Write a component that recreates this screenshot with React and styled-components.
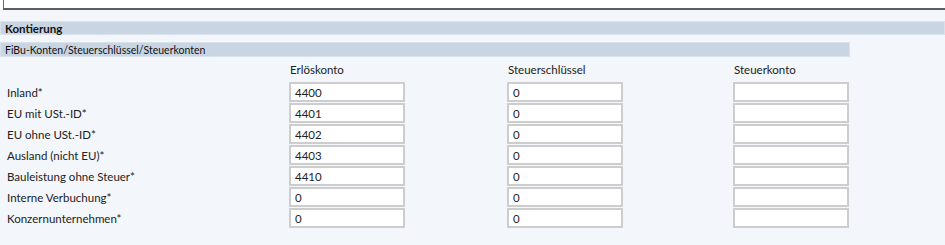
import React from "react";
import styled, { createGlobalStyle } from "styled-components";

const FONT = `"Lato", "Open Sans", "Noto Sans", sans-serif`;

const Global = createGlobalStyle`
  html, body { margin: 0; padding: 0; }
  body {
    background: #f3f6fa;
    font-family: ${FONT};
    font-size: 11.5px;
    color: #1e1e1e;
  }
`;

const Page = styled.div`
  width: 945px;
  height: 245px;
  overflow: hidden;
  background: #f3f6fa;
`;

const TopArea = styled.div`
  background: #ffffff;
  padding-left: 3px;
  height: 10px;
`;

const TopBox = styled.div`
  height: 8px;
  border-left: 1px solid #6a6a6a;
  border-bottom: 2px solid #5e5e5e;
  background: #ffffff;
`;

const SectionBar = styled.div`
  margin-top: ${(p) => p.$mt}px;
  width: ${(p) => p.$w};
  height: ${(p) => p.$h}px;
  box-sizing: border-box;
  background: #c9d5e3;
  border: 1px solid #d9e1eb;
  display: flex;
  align-items: center;
  padding-left: 4px;
  font-weight: ${(p) => (p.$bold ? 700 : 400)};
  font-size: ${(p) => p.$fs}px;
  color: #111;
  white-space: nowrap;
`;

const HeaderGrid = styled.div`
  display: grid;
  grid-template-columns: 282px 218px 226px 1fr;
  padding-left: 7px;
  height: 25px;
`;

const HeaderCell = styled.div`
  display: flex;
  align-items: center;
  padding-left: 1px;
  font-size: 11.5px;
  color: #222;
`;

const Form = styled.div`
  display: grid;
  grid-template-columns: 282px 218px 226px 1fr;
  grid-auto-rows: 21px;
  padding-left: 7px;
`;

const Label = styled.div`
  display: flex;
  align-items: center;
  height: 20px;
  font-size: 11.5px;
  color: #222;
  white-space: nowrap;
`;

const Field = styled.input`
  box-sizing: border-box;
  width: 116px;
  height: 20px;
  margin: 0;
  padding: 0 0 0 4px;
  border: 2px solid #cdcdcd;
  background: #ffffff;
  font-family: ${FONT};
  font-size: 11.5px;
  color: #1e1e1e;
  outline: none;
`;

const rows = [
  ["Inland*", "4400", "0", ""],
  ["EU mit USt.-ID*", "4401", "0", ""],
  ["EU ohne USt.-ID*", "4402", "0", ""],
  ["Ausland (nicht EU)*", "4403", "0", ""],
  ["Bauleistung ohne Steuer*", "4410", "0", ""],
  ["Interne Verbuchung*", "0", "0", ""],
  ["Konzernunternehmen*", "0", "0", ""],
];

export default function App() {
  return (
    <Page>
      <Global />
      <TopArea>
        <TopBox />
      </TopArea>
      <SectionBar $mt={11} $w="945px" $h={14} $fs={11.5} $bold>
        Kontierung
      </SectionBar>
      <SectionBar $mt={7} $w="850px" $h={15} $fs={10.5}>
        FiBu-Konten/Steuerschlüssel/Steuerkonten
      </SectionBar>
      <HeaderGrid>
        <span />
        <HeaderCell>Erlöskonto</HeaderCell>
        <HeaderCell>Steuerschlüssel</HeaderCell>
        <HeaderCell>Steuerkonto</HeaderCell>
      </HeaderGrid>
      <Form>
        {rows.map(([label, a, b, c]) => (
          <React.Fragment key={label}>
            <Label>{label}</Label>
            <Field defaultValue={a} />
            <Field defaultValue={b} />
            <Field defaultValue={c} />
          </React.Fragment>
        ))}
      </Form>
    </Page>
  );
}
